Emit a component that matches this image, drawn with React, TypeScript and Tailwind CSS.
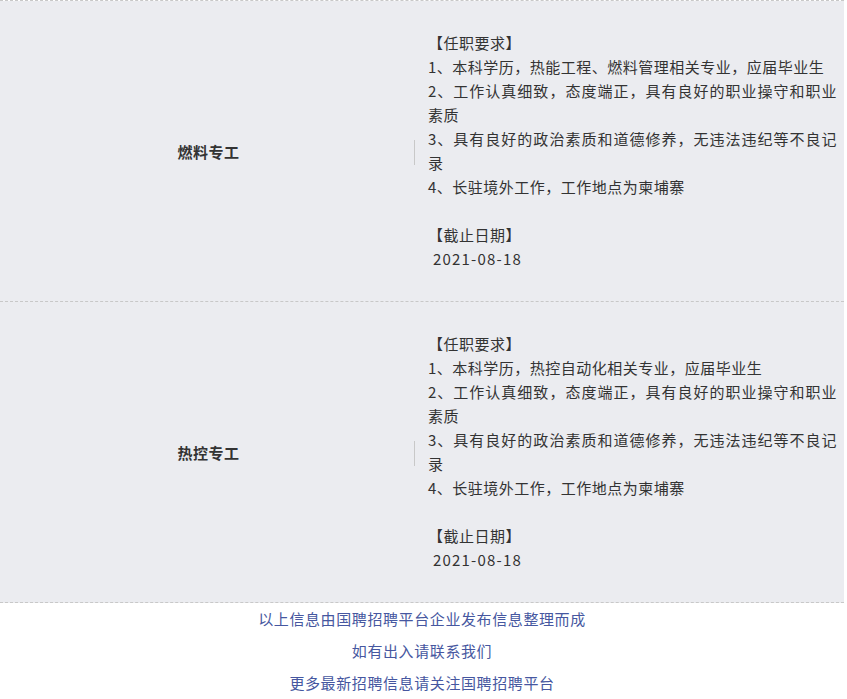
const font = { fontFamily: '"Noto Sans CJK SC", "Noto Sans", sans-serif' }

interface IJob {
    title: string,
    requirements: string[],
    deadline: string
}

const jobs: IJob[] = [
    {
        title: "燃料专工",
        requirements: [
            "1、本科学历，热能工程、燃料管理相关专业，应届毕业生",
            "2、工作认真细致，态度端正，具有良好的职业操守和职业素质",
            "3、具有良好的政治素质和道德修养，无违法违纪等不良记录",
            "4、长驻境外工作，工作地点为柬埔寨",
        ],
        deadline: "2021-08-18",
    },
    {
        title: "热控专工",
        requirements: [
            "1、本科学历，热控自动化相关专业，应届毕业生",
            "2、工作认真细致，态度端正，具有良好的职业操守和职业素质",
            "3、具有良好的政治素质和道德修养，无违法违纪等不良记录",
            "4、长驻境外工作，工作地点为柬埔寨",
        ],
        deadline: "2021-08-18",
    },
]

const JobRow = ({ job }: { job: IJob }) => {
    return (
        <div className="flex bg-[#ebecf0] border-b border-dashed border-[#c8c8c8]">
            <div className="w-[414px] flex items-center justify-center pt-[3px] pl-[3px]">
                <span className="font-bold text-[15px] tracking-[0.5px] text-[#333]">{job.title}</span>
            </div>
            <div className="w-px h-[25px] bg-[#c8c8c8] self-center mt-[2px]"></div>
            <div className="w-[409px] ml-[13px] py-[30px] text-[15px] leading-[24px] tracking-[0.5px] text-[#333] text-justify">
                <p>【任职要求】</p>
                {job.requirements.map(r => <p key={r}>{r}</p>)}
                <p className="h-[24px]"></p>
                <p>【截止日期】</p>
                <p className="pl-[5px] tracking-[1.2px]">{job.deadline}</p>
            </div>
        </div>
    )
}

export default function App() {
    return (
        <div className="w-[844px] bg-white" style={font}>
            <div className="border-t border-dashed border-[#c8c8c8]">
                {jobs.map(job => <JobRow key={job.title} job={job} />)}
            </div>
            <div className="text-center text-[15px] leading-[32px] tracking-[0.6px] text-[#4657a0]">
                <p>以上信息由国聘招聘平台企业发布信息整理而成</p>
                <p>如有出入请联系我们</p>
                <p>更多最新招聘信息请关注国聘招聘平台</p>
            </div>
        </div>
    )
}
